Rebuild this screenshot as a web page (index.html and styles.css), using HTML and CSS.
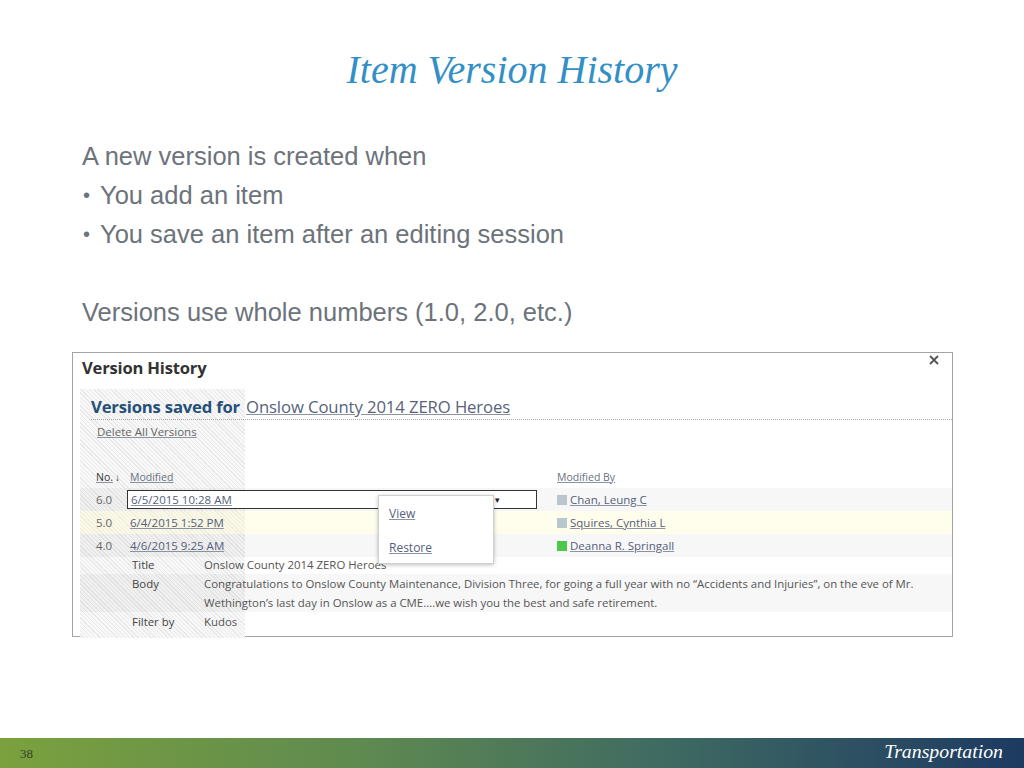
FILE: index.html
```html
<!DOCTYPE html>
<html>
<head>
<meta charset="utf-8">
<link rel="stylesheet" href="styles.css">
</head>
<body>
<div class="slide">
  <h1 class="title">Item Version History</h1>
  <div class="bullets">
    <p class="line">A new version is created when</p>
    <p class="line bullet"><span class="dot">•</span>You add an item</p>
    <p class="line bullet"><span class="dot">•</span>You save an item after an editing session</p>
    <p class="line gap">Versions use whole numbers (1.0, 2.0, etc.)</p>
  </div>

  <div class="panel">
    <div class="panel-head">
      <span class="panel-title">Version History</span>
      <svg class="close" width="10" height="10" viewBox="0 0 10 10"><path d="M1 1 L9 9 M9 1 L1 9" stroke="#555" stroke-width="1.8" fill="none"/></svg>
    </div>
    <div class="panel-body">
      <div class="saved">
        <span class="saved-label">Versions saved for</span>
        <a class="saved-link">Onslow County 2014 ZERO Heroes</a>
      </div>
      <div class="delete"><a>Delete All Versions</a></div>

      <div class="thead">
        <span class="c-no"><a>No.</a><span class="arrow">↓</span></span>
        <span class="c-date"><a>Modified</a></span>
        <span class="c-by"><a>Modified By</a></span>
      </div>
      <div class="row r1">
        <span class="c-no">6.0</span>
        <span class="c-date boxed"><span class="datebox"><a>6/5/2015 10:28 AM</a><span class="caret">▾</span></span></span>
        <span class="c-by"><span class="sq"></span><a>Chan, Leung C</a></span>
      </div>
      <div class="row r2">
        <span class="c-no">5.0</span>
        <span class="c-date"><a>6/4/2015 1:52 PM</a></span>
        <span class="c-by"><span class="sq"></span><a>Squires, Cynthia L</a></span>
      </div>
      <div class="row r3">
        <span class="c-no">4.0</span>
        <span class="c-date"><a>4/6/2015 9:25 AM</a></span>
        <span class="c-by"><span class="sq green"></span><a>Deanna R. Springall</a></span>
      </div>
      <div class="detail">
        <div class="drow"><span class="dl">Title</span><span class="dv">Onslow County 2014 ZERO Heroes</span></div>
        <div class="drow shade"><span class="dl">Body</span><span class="dv">Congratulations to Onslow County Maintenance, Division Three, for going a full year with no “Accidents and Injuries”, on the eve of Mr.<br>Wethington’s last day in Onslow as a CME....we wish you the best and safe retirement.</span></div>
        <div class="drow"><span class="dl">Filter by</span><span class="dv">Kudos</span></div>
      </div>

      <div class="menu">
        <a>View</a>
        <a>Restore</a>
      </div>
    </div>
  </div>

  <div class="footer">
    <span class="pagenum">38</span>
    <span class="brand">Transportation</span>
  </div>
</div>
</body>
</html>
```
FILE: styles.css
```css
* { box-sizing: border-box; }
html, body { margin: 0; padding: 0; background: #fff; }
.slide {
  width: 1024px;
  height: 768px;
  display: flex;
  flex-direction: column;
  position: relative;
  overflow: hidden;
}
.title {
  margin: 47px 0 0 0;
  height: 46px;
  text-align: center;
  font-family: "Liberation Serif", serif;
  font-style: italic;
  font-weight: normal;
  font-size: 40px;
  line-height: 46px;
  color: #3390c6;
}
.bullets {
  margin: 44px 0 0 82px;
  font-family: "Liberation Sans", Arial, sans-serif;
  font-size: 25.5px;
  color: #6c737a;
}
.line { margin: 0; height: 39px; line-height: 39px; }
.line.gap { margin-top: 39px; }
.bullet { display: flex; }
.dot { width: 18px; font-size: 20px; padding-left: 1px; }

.panel {
  margin: 20px 0 0 72px;
  width: 881px;
  height: 285px;
  border: 1px solid #a3a3a3;
  font-family: "Open Sans", "Noto Sans", sans-serif;
  color: #444;
  display: flex;
  flex-direction: column;
}
.panel a { color: #55607a; text-decoration: underline; text-decoration-color: #8c93a0; }
.panel-head {
  height: 36px;
  display: flex;
  justify-content: space-between;
  align-items: flex-start;
  padding: 3px 13px 0 9px;
}
.panel-title { font-size: 16.6px; font-weight: 700; color: #333; letter-spacing: -0.2px; }
.close { margin-top: -1px; }
.panel-body {
  flex: 1;
  margin-left: 7px;
  position: relative;
  background-image: repeating-linear-gradient(45deg, #f8f8f8 0 2px, #e9e9e9 2px 3px);
  background-size: 165px 100%;
  background-repeat: no-repeat;
  padding-top: 5px;
  margin-bottom: -2px;
}
.saved {
  margin-left: 11px;
  height: 26px;
  border-bottom: 1px dotted #aaa;
  display: flex;
  align-items: center;
  white-space: nowrap;
}
.saved-label { font-size: 16.7px; font-weight: 700; color: #24507a; letter-spacing: -0.2px; margin-right: 6px; }
.saved-link { font-size: 16.7px; letter-spacing: -0.1px; }
.panel .saved-link { color: #59627a; }
.delete { margin: 3px 0 0 17px; font-size: 11.5px; height: 18px; line-height: 18px; }
.panel .delete a { color: #666; }

.thead, .row { display: flex; align-items: center; }
.thead { margin-top: 27px; height: 17px; font-size: 10.5px; margin-bottom: 3px; }
.panel .thead a { color: #6a7180; }
.thead .c-no a { color: #333; }
.arrow { font-size: 10px; margin-left: 2px; color: #333; }
.c-no { width: 47px; padding-left: 16px; flex: none; }
.c-date { width: 430px; flex: none; padding-left: 3px; }
.c-date.boxed { padding-left: 0; }
.c-by { display: flex; align-items: center; }
.row { height: 23px; font-size: 11.5px; color: #666; }
.r1 { background: rgba(0,0,0,0.03); }
.r2 { background: rgba(255,248,200,0.35); }
.r3 { background: rgba(0,0,0,0.03); }
.datebox {
  display: flex;
  justify-content: space-between;
  align-items: center;
  width: 410px;
  height: 19px;
  border: 1px solid #333;
  padding: 0 36px 0 3px;
  background: #fff;
}
.caret { font-size: 9px; color: #222; }
.sq { width: 10px; height: 10px; background: #b9c6ce; margin-right: 3px; }
.sq.green { background: #4cc94c; }

.detail { font-size: 11.4px; color: #555; margin-top: -2px; }
.drow { display: flex; line-height: 19px; padding: 0 0 0 52px; }
.drow.shade { background: rgba(0,0,0,0.03); }
.dl { width: 72px; flex: none; color: #444; }
.dv { white-space: nowrap; }

.menu {
  position: absolute;
  left: 298px;
  top: 106px;
  width: 116px;
  height: 69px;
  background: #fff;
  border: 1px solid #d0d0d0;
  box-shadow: 0 1px 4px rgba(0,0,0,0.25);
  display: flex;
  flex-direction: column;
  gap: 16px;
  padding: 9px 0 0 10px;
  font-size: 12px;
  line-height: 18px;
}

.footer {
  margin-top: auto;
  height: 30px;
  background: linear-gradient(90deg, #7ba13d 0%, #5f8a50 35%, #3f6a62 65%, #1d3a62 100%);
  display: flex;
  justify-content: space-between;
  align-items: center;
  padding: 0 21px 0 20px;
  font-family: "Liberation Serif", serif;
}
.pagenum { font-size: 13px; color: #34432f; margin-top: 2px; }
.brand { font-size: 19.8px; font-style: italic; color: #fff; margin-top: -3px; }
```
